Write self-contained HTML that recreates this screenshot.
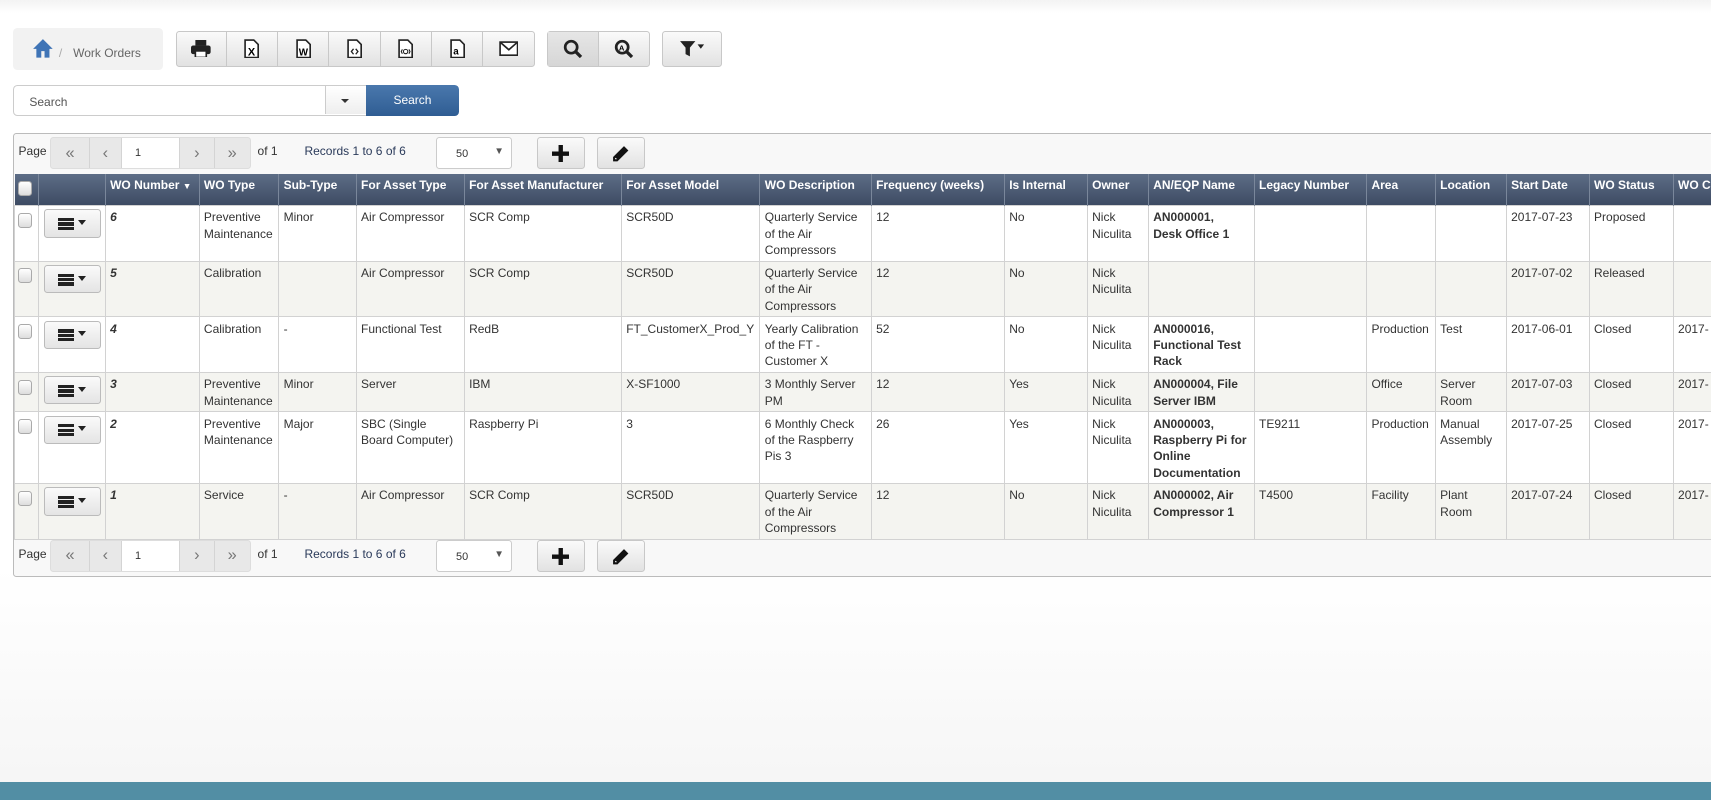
<!DOCTYPE html>
<html><head><meta charset="utf-8"><style>
html,body{margin:0;padding:0;}
body{width:1711px;height:800px;overflow:hidden;background:#fff;font-family:"Liberation Sans",sans-serif;}
#w{zoom:1.0912;width:1568px;height:733px;position:relative;background:linear-gradient(#f3f3f3,#fff 12px,#fff 520px,#f6f6f6 715px);overflow:hidden;}
.abs{position:absolute;}
.bc{left:12px;top:26px;width:137px;height:38px;background:#f2f2f2;border-radius:4px;font-size:11px;color:#666;}
.btn{position:absolute;height:33px;border:1px solid #c8c8c8;border-radius:3px;background:linear-gradient(#fafafa,#e2e2e2);box-sizing:border-box;}
.grp{display:flex;}
.grp div{border-right:1px solid #c8c8c8;display:flex;align-items:center;justify-content:center;}
.grp div:last-child{border-right:none}
.sbox{left:12px;top:78px;width:324px;height:28px;border:1px solid #ccc;border-radius:4px 0 0 4px;box-sizing:border-box;background:#fff;font-size:11px;color:#555;}
.panel{left:12px;top:122px;width:1600px;height:407px;border:1px solid #bbb;border-radius:3px;background:#f8f8f8;box-sizing:border-box;}
table{border-collapse:collapse;table-layout:fixed;width:1600px;position:absolute;left:13px;top:159px;font-size:11px;color:#333;}
th{background:linear-gradient(#5d6d86,#3d4b63);color:#fff;font-weight:bold;text-align:left;padding:4px 4px 0;height:25px;vertical-align:top;border-left:1px solid #7a879b;white-space:nowrap;overflow:hidden;font-size:11px;}
td{border:1px solid #d2d2d2;padding:3px 4px 2px;vertical-align:top;line-height:15px;background:#fff;overflow:hidden;}
tr.z td{background:#f4f4f0;}
.cb{width:11px;height:12px;border:1px solid #aaa;border-radius:3px;background:linear-gradient(#fff,#ddd);margin:3px 0 0 -1px;}
.mb{width:51px;height:24px;border:1px solid #bbb;border-radius:3px;background:linear-gradient(#fafafa,#e4e4e4);position:relative;margin-left:0;}
.mb i{position:absolute;left:12px;width:15px;height:3px;background:#222;}
.mb b{position:absolute;left:31px;top:9px;border:4px solid transparent;border-top:5px solid #222;border-bottom:none;}
.pg{position:absolute;left:0;width:700px;height:36px;font-size:11px;color:#333;}
.pgb{position:absolute;top:4px;left:34px;width:184px;height:29px;border:1px solid #ddd;border-radius:3px;background:#e8e8e8;box-sizing:border-box;display:flex;}
.pgb span{display:flex;align-items:center;justify-content:center;color:#777;font-size:15px;border-right:1px solid #d4d4d4;}
</style></head><body><div id="w">
<div class="abs bc"><svg class="abs" style="left:17px;top:9px" width="20" height="18" viewBox="0 0 20 18"><path d="M10 1 L1 10 H4 V18 H8.5 V12 H11.5 V18 H16 V10 H19 Z" fill="#3f74b6"/></svg><span class="abs" style="left:42px;top:16px;color:#aaa">/</span><span class="abs" style="left:55px;top:16px">Work Orders</span></div>

<div class="btn grp" style="left:161px;top:28px;width:329px">
<div style="width:46px"><svg width="18" height="16" viewBox="0 0 18 16"><rect x="4" y="0" width="10" height="5" fill="#222"/><rect x="0" y="5" width="18" height="8" rx="2" fill="#222"/><rect x="4" y="10" width="10" height="6" fill="#fff" stroke="#222" stroke-width="1.5"/></svg></div>
<div style="width:47px"><svg width="14" height="18"><path d="M1 1H9L13 5V17H1Z" fill="#fff" stroke="#222" stroke-width="1.5"/><text x="3.5" y="15" font-size="10" font-weight="bold" font-family="Liberation Sans">X</text></svg></div>
<div style="width:47px"><svg width="14" height="18"><path d="M1 1H9L13 5V17H1Z" fill="#fff" stroke="#222" stroke-width="1.5"/><text x="2.5" y="15" font-size="9" font-weight="bold" font-family="Liberation Sans">W</text></svg></div>
<div style="width:47px"><svg width="14" height="18"><path d="M1 1H9L13 5V17H1Z" fill="#fff" stroke="#222" stroke-width="1.5"/><path d="M6 9L4 11.5L6 14M8 9L10 11.5L8 14" fill="none" stroke="#222" stroke-width="1.2"/></svg></div>
<div style="width:47px"><svg width="14" height="18"><path d="M1 1H9L13 5V17H1Z" fill="#fff" stroke="#222" stroke-width="1.5"/><circle cx="7" cy="11.5" r="2" fill="none" stroke="#222"/><path d="M4 9.5L3 11.5L4 13.5M10 9.5L11 11.5L10 13.5" fill="none" stroke="#222"/></svg></div>
<div style="width:47px"><svg width="14" height="18"><path d="M1 1H9L13 5V17H1Z" fill="#fff" stroke="#222" stroke-width="1.5"/><text x="3" y="14" font-size="9" font-weight="bold" font-family="Liberation Sans">a</text></svg></div>
<div style="width:47px"><svg width="18" height="14"><rect x="1" y="1" width="16" height="12" fill="#fff" stroke="#222" stroke-width="1.5"/><path d="M1 1L9 8L17 1" fill="none" stroke="#222" stroke-width="1.5"/></svg></div>
</div>
<div class="btn grp" style="left:501px;top:28px;width:95px">
<div style="width:47px;background:linear-gradient(#e6e6e6,#d6d6d6)"><svg width="18" height="18"><circle cx="7.5" cy="7.5" r="5.5" fill="none" stroke="#222" stroke-width="2.5"/><path d="M11.5 11.5L16.5 16.5" stroke="#222" stroke-width="3"/></svg></div>
<div style="width:47px"><svg width="18" height="18"><circle cx="7.5" cy="7.5" r="5.5" fill="none" stroke="#222" stroke-width="2.5"/><path d="M11.5 11.5L16.5 16.5" stroke="#222" stroke-width="3"/><text x="4.5" y="10.5" font-size="7" font-weight="bold" font-family="Liberation Sans">A</text></svg></div>
</div>
<div class="btn" style="left:607px;top:28px;width:55px;display:flex;align-items:center;justify-content:center"><svg width="24" height="16"><path d="M1 1H15L10 7V15L6 13V7Z" fill="#222"/><path d="M17 4H23L20 8Z" fill="#222"/></svg></div>

<div class="abs sbox"><span class="abs" style="left:14px;top:8px">Search</span><div class="abs" style="left:285px;top:0;width:38px;height:26px;border-left:1px solid #ccc;background:linear-gradient(#fff,#eee)"><b class="abs" style="left:14px;top:12px;border:4px solid transparent;border-top:4px solid #333;border-bottom:none"></b></div></div>
<div class="abs" style="left:335px;top:78px;width:86px;height:28px;background:linear-gradient(#4a78ad,#2f5d93);border-radius:0 4px 4px 0;color:#fff;font-size:11px;text-align:center;line-height:28px">Search</div>

<div class="abs panel"></div>

<div class="pg" style="left:12px;top:122px">
<span class="abs" style="left:5px;top:10px">Page</span>
<div class="pgb"><span style="width:35px">«</span><span style="width:29px">‹</span><span style="width:54px;background:#fff;color:#333;font-size:10px;justify-content:flex-start;padding-left:12px;box-sizing:border-box">1</span><span style="width:31px">›</span><span style="width:33px;border:none">»</span></div>
<span class="abs" style="left:224px;top:10px">of 1</span>
<span class="abs" style="left:267px;top:10px;color:#2a3a5a">Records 1 to 6 of 6</span>
<div class="abs" style="left:388px;top:4px;width:69px;height:29px;border:1px solid #ccc;border-radius:3px;background:#fff;box-sizing:border-box;font-size:10px"><span class="abs" style="left:17px;top:9px">50</span><span class="abs" style="left:52px;top:7px;font-size:9px;color:#555">▼</span></div>
<div class="btn" style="left:480px;top:4px;width:44px;height:29px"><svg class="abs" style="left:13px;top:6px" width="16" height="16"><path d="M6 0H10V6H16V10H10V16H6V10H0V6H6Z" fill="#111"/></svg></div>
<div class="btn" style="left:535px;top:4px;width:44px;height:29px"><svg class="abs" style="left:13px;top:6px" width="16" height="16"><path d="M11 1L15 5L5 15H1V11Z" fill="#111"/><path d="M3 12L4 13" stroke="#fff"/></svg></div>
</div>

<table>
<colgroup><col style="width:22px"><col style="width:61px"><col style="width:86px"><col style="width:73px"><col style="width:71px"><col style="width:99px"><col style="width:144px"><col style="width:127px"><col style="width:102px"><col style="width:122px"><col style="width:76px"><col style="width:56px"><col style="width:97px"><col style="width:103px"><col style="width:63px"><col style="width:65px"><col style="width:76px"><col style="width:77px"><col style="width:80px"></colgroup>
<tr style="height:29px"><th style="border-left:none"><div class="cb"></div></th><th></th><th>WO Number <span style="font-size:8px">▼</span></th><th>WO Type</th><th>Sub-Type</th><th>For Asset Type</th><th>For Asset Manufacturer</th><th>For Asset Model</th><th>WO Description</th><th>Frequency (weeks)</th><th>Is Internal</th><th>Owner</th><th>AN/EQP Name</th><th>Legacy Number</th><th>Area</th><th>Location</th><th>Start Date</th><th>WO Status</th><th>WO Cl</th></tr>
<tr style="height:51px"><td><div class="cb"></div></td><td><div class="mb"><i style="top:7px"></i><i style="top:11px"></i><i style="top:15px"></i><b></b></div></td><td><b><i>6</i></b></td><td>Preventive Maintenance</td><td>Minor</td><td>Air Compressor</td><td>SCR Comp</td><td>SCR50D</td><td>Quarterly Service of the Air Compressors</td><td>12</td><td>No</td><td>Nick Niculita</td><td><b>AN000001,<br>Desk Office 1</b></td><td></td><td></td><td></td><td>2017-07-23</td><td>Proposed</td><td></td></tr>
<tr class="z" style="height:51px"><td><div class="cb"></div></td><td><div class="mb"><i style="top:7px"></i><i style="top:11px"></i><i style="top:15px"></i><b></b></div></td><td><b><i>5</i></b></td><td>Calibration</td><td></td><td>Air Compressor</td><td>SCR Comp</td><td>SCR50D</td><td>Quarterly Service of the Air Compressors</td><td>12</td><td>No</td><td>Nick Niculita</td><td></td><td></td><td></td><td></td><td>2017-07-02</td><td>Released</td><td></td></tr>
<tr style="height:50px"><td><div class="cb"></div></td><td><div class="mb"><i style="top:7px"></i><i style="top:11px"></i><i style="top:15px"></i><b></b></div></td><td><b><i>4</i></b></td><td>Calibration</td><td>-</td><td>Functional Test</td><td>RedB</td><td style="white-space:nowrap">FT_CustomerX_Prod_Y</td><td>Yearly Calibration of the FT - Customer X</td><td>52</td><td>No</td><td>Nick Niculita</td><td><b>AN000016,<br>Functional Test Rack</b></td><td></td><td>Production</td><td>Test</td><td>2017-06-01</td><td>Closed</td><td>2017-</td></tr>
<tr class="z" style="height:36px"><td><div class="cb"></div></td><td><div class="mb"><i style="top:7px"></i><i style="top:11px"></i><i style="top:15px"></i><b></b></div></td><td><b><i>3</i></b></td><td>Preventive Maintenance</td><td>Minor</td><td>Server</td><td>IBM</td><td>X-SF1000</td><td>3 Monthly Server PM</td><td>12</td><td>Yes</td><td>Nick Niculita</td><td><b>AN000004, File Server IBM</b></td><td></td><td>Office</td><td>Server Room</td><td>2017-07-03</td><td>Closed</td><td>2017-</td></tr>
<tr style="height:65px"><td><div class="cb"></div></td><td><div class="mb"><i style="top:7px"></i><i style="top:11px"></i><i style="top:15px"></i><b></b></div></td><td><b><i>2</i></b></td><td>Preventive Maintenance</td><td>Major</td><td>SBC (Single Board Computer)</td><td>Raspberry Pi</td><td>3</td><td>6 Monthly Check of the Raspberry Pis 3</td><td>26</td><td>Yes</td><td>Nick Niculita</td><td><b>AN000003, Raspberry Pi for Online Documentation</b></td><td>TE9211</td><td>Production</td><td>Manual Assembly</td><td>2017-07-25</td><td>Closed</td><td>2017-</td></tr>
<tr class="z" style="height:50px"><td><div class="cb"></div></td><td><div class="mb"><i style="top:7px"></i><i style="top:11px"></i><i style="top:15px"></i><b></b></div></td><td><b><i>1</i></b></td><td>Service</td><td>-</td><td>Air Compressor</td><td>SCR Comp</td><td>SCR50D</td><td>Quarterly Service of the Air Compressors</td><td>12</td><td>No</td><td>Nick Niculita</td><td><b>AN000002, Air Compressor 1</b></td><td>T4500</td><td>Facility</td><td>Plant Room</td><td>2017-07-24</td><td>Closed</td><td>2017-</td></tr>
</table>

<div class="pg" style="left:12px;top:491px">
<span class="abs" style="left:5px;top:10px">Page</span>
<div class="pgb"><span style="width:35px">«</span><span style="width:29px">‹</span><span style="width:54px;background:#fff;color:#333;font-size:10px;justify-content:flex-start;padding-left:12px;box-sizing:border-box">1</span><span style="width:31px">›</span><span style="width:33px;border:none">»</span></div>
<span class="abs" style="left:224px;top:10px">of 1</span>
<span class="abs" style="left:267px;top:10px;color:#2a3a5a">Records 1 to 6 of 6</span>
<div class="abs" style="left:388px;top:4px;width:69px;height:29px;border:1px solid #ccc;border-radius:3px;background:#fff;box-sizing:border-box;font-size:10px"><span class="abs" style="left:17px;top:9px">50</span><span class="abs" style="left:52px;top:7px;font-size:9px;color:#555">▼</span></div>
<div class="btn" style="left:480px;top:4px;width:44px;height:29px"><svg class="abs" style="left:13px;top:6px" width="16" height="16"><path d="M6 0H10V6H16V10H10V16H6V10H0V6H6Z" fill="#111"/></svg></div>
<div class="btn" style="left:535px;top:4px;width:44px;height:29px"><svg class="abs" style="left:13px;top:6px" width="16" height="16"><path d="M11 1L15 5L5 15H1V11Z" fill="#111"/><path d="M3 12L4 13" stroke="#fff"/></svg></div>
</div>

<div class="abs" style="left:0;top:717px;width:1568px;height:16px;background:#528ea4"></div>
</div></body></html>
